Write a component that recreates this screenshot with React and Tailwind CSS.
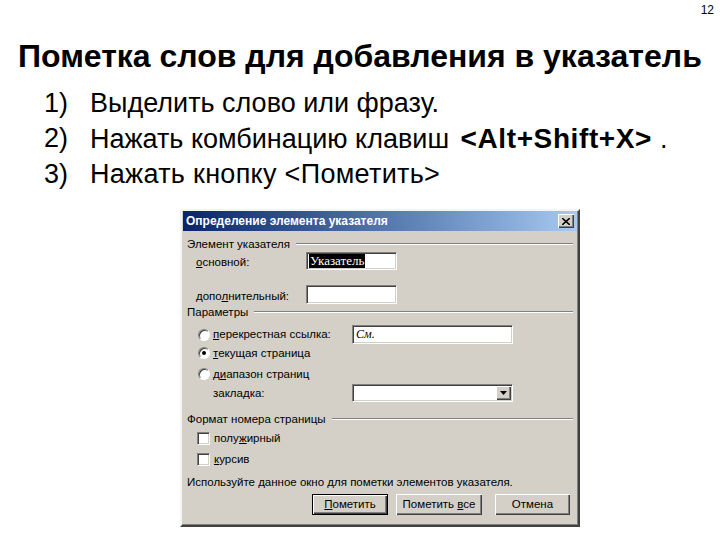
import React from 'react';

function GroupHeader({ label }) {
  return (
    <div className="h-[16px] flex items-center pl-[5px] pr-[5px]">
      <span className="mr-[6px]">{label}</span>
      <div className="flex-1 border-t border-t-[#808080] border-b border-b-white" />
    </div>
  );
}

function Sunken({ className = '', children }) {
  return (
    <div
      className={`bg-white border border-t-[#808080] border-l-[#808080] border-r-white border-b-white shadow-[inset_1px_1px_#404040,inset_-1px_-1px_#d4d0c8] ${className}`}
    >
      {children}
    </div>
  );
}

function Radio({ checked }) {
  return (
    <span className="w-[12px] h-[12px] rounded-full bg-white border border-t-[#808080] border-l-[#808080] border-r-white border-b-white shadow-[inset_1px_1px_#404040] flex items-center justify-center shrink-0">
      {checked && <span className="w-[4px] h-[4px] rounded-full bg-black" />}
    </span>
  );
}

function Check() {
  return (
    <span className="w-[13px] h-[13px] bg-white border border-t-[#808080] border-l-[#808080] border-r-white border-b-white shadow-[inset_1px_1px_#404040,inset_-1px_-1px_#d4d0c8] shrink-0" />
  );
}

function Button({ children, width, isDefault }) {
  return (
    <div
      className={`h-[21px] flex items-center justify-center bg-[#d4d0c8] ${
        isDefault
          ? 'border border-black shadow-[inset_1px_1px_white,inset_-1px_-1px_#404040,inset_-2px_-2px_#808080]'
          : 'shadow-[inset_1px_1px_white,inset_-1px_-1px_#404040,inset_-2px_-2px_#808080]'
      }`}
      style={{ width }}
    >
      {children}
    </div>
  );
}

export default function App() {
  return (
    <div className="w-[720px] h-[540px] bg-white overflow-hidden font-['Liberation_Sans',Arial,sans-serif] text-black">
      {/* page number */}
      <div className="text-right pr-[6px] pt-[3px] text-[12px] leading-[14px]">12</div>

      {/* title */}
      <h1 className="pl-[18px] mt-[23px] text-[32px] leading-[32px] font-bold whitespace-nowrap">
        Пометка слов для добавления в указатель
      </h1>

      {/* steps */}
      <ol className="mt-[14px] text-[27px] leading-[35px] whitespace-nowrap">
        <li className="flex">
          <span className="w-[90px] pl-[44px]">1)</span>
          <span>Выделить слово или фразу.</span>
        </li>
        <li className="flex">
          <span className="w-[90px] pl-[44px]">2)</span>
          <span>
            Нажать комбинацию клавиш{' '}
            <b className="ml-[4px] text-[28px] tracking-[0.6px]">&lt;Alt+Shift+X&gt;</b>
            <span className="ml-[8px]">.</span>
          </span>
        </li>
        <li className="flex">
          <span className="w-[90px] pl-[44px]">3)</span>
          <span className="tracking-[0.3px]">Нажать кнопку &lt;Пометить&gt;</span>
        </li>
      </ol>

      {/* dialog */}
      <div className="ml-[180px] mt-[17px] w-[400px] h-[318px] bg-[#d4d0c8] border-2 border-t-[#f4f4f4] border-l-[#f4f4f4] border-r-[#404040] border-b-[#404040] shadow-[inset_-1px_-1px_#808080] text-[11.5px] leading-[13px]">
        {/* title bar */}
        <div className="h-[20px] mx-[1px] flex items-center justify-between pl-[3px] pr-[3px] bg-gradient-to-r from-[#0a246a] to-[#a6caf0]">
          <span className="text-white font-bold text-[12px]">Определение элемента указателя</span>
          <span className="w-[16px] h-[14px] bg-[#d4d0c8] shadow-[inset_1px_1px_white,inset_-1px_-1px_#404040,inset_-2px_-2px_#808080] flex items-center justify-center">
            <svg width="8" height="7" viewBox="0 0 8 7">
              <path d="M0 0 L8 7 M8 0 L0 7" stroke="black" strokeWidth="1.6" />
            </svg>
          </span>
        </div>

        <div className="pt-[5px]">
          <GroupHeader label="Элемент указателя" />

          <div className="h-[18px] flex items-center">
            <span className="ml-[14px] w-[110px] pt-[3px]">
              <u>о</u>сновной:
            </span>
            <Sunken className="w-[91px] h-[18px] flex items-center pl-[2px]">
              <span className="bg-black text-white font-['Times_New_Roman','Liberation_Serif',serif] text-[13px] leading-[14px] px-[1px]">
                Указатель
              </span>
            </Sunken>
          </div>

          <div className="h-[19px] mt-[15px] flex items-center">
            <span className="ml-[14px] w-[110px] pt-[3px]">
              допо<u>л</u>нительный:
            </span>
            <Sunken className="w-[91px] h-[19px]" />
          </div>

          <GroupHeader label="Параметры" />

          <div className="h-[19px] mt-[5px] flex items-center">
            <span className="ml-[16px] mr-[3px]">
              <Radio />
            </span>
            <span className="w-[139px]">
              <u>п</u>ерекрестная ссылка:
            </span>
            <Sunken className="w-[161px] h-[19px] flex items-center pl-[3px]">
              <span className="font-['Times_New_Roman','Liberation_Serif',serif] italic text-[12px]">См.</span>
            </Sunken>
          </div>

          <div className="h-[16px] mt-[1px] flex items-center">
            <span className="ml-[16px] mr-[3px]">
              <Radio checked />
            </span>
            <span>
              <u>т</u>екущая страница
            </span>
          </div>

          <div className="h-[16px] mt-[5px] flex items-center">
            <span className="ml-[16px] mr-[3px]">
              <Radio />
            </span>
            <span>
              д<u>и</u>апазон страниц
            </span>
          </div>

          <div className="h-[18px] mt-[2px] flex items-center">
            <span className="ml-[31px] w-[139px]">закладка:</span>
            <Sunken className="w-[161px] h-[18px] flex justify-end items-center pr-[1px]">
              <span className="w-[15px] h-[14px] bg-[#d4d0c8] shadow-[inset_1px_1px_white,inset_-1px_-1px_#404040,inset_-2px_-2px_#808080] flex items-center justify-center">
                <svg width="7" height="4" viewBox="0 0 7 4">
                  <path d="M0 0 H7 L3.5 4 Z" fill="black" />
                </svg>
              </span>
            </Sunken>
          </div>

          <div className="mt-[9px]">
            <GroupHeader label="Формат номера страницы" />
          </div>

          <div className="h-[16px] mt-[3px] flex items-center">
            <span className="ml-[15px] mr-[4px] flex">
              <Check />
            </span>
            <span>
              полу<u>ж</u>ирный
            </span>
          </div>

          <div className="h-[16px] mt-[5px] flex items-center">
            <span className="ml-[15px] mr-[4px] flex">
              <Check />
            </span>
            <span>
              <u>к</u>урсив
            </span>
          </div>

          <div className="h-[16px] mt-[7px] flex items-center pl-[5px]">
            Используйте данное окно для пометки элементов указателя.
          </div>

          <div className="mt-[4px] flex items-center pl-[130px]">
            <Button width={76} isDefault>
              <span>
                <u>П</u>ометить
              </span>
            </Button>
            <span className="w-[8px]" />
            <Button width={86}>
              <span>
                Пометить <u>в</u>се
              </span>
            </Button>
            <span className="w-[13px]" />
            <Button width={75}>Отмена</Button>
          </div>
        </div>
      </div>
    </div>
  );
}
